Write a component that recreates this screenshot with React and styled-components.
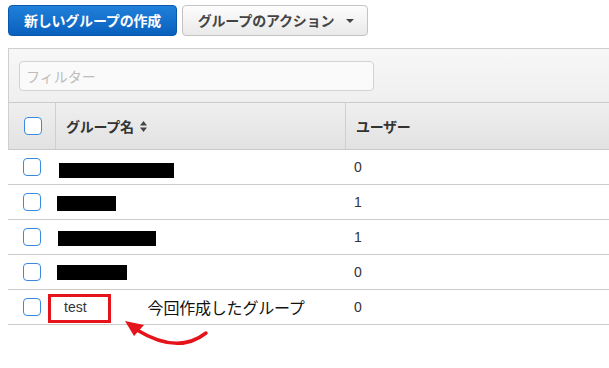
import React from "react";
import styled, { createGlobalStyle } from "styled-components";

const GlobalStyle = createGlobalStyle`
  body {
    margin: 0;
    background: #fff;
    font-family: "Liberation Sans", "Noto Sans CJK JP", sans-serif;
    color: #333;
  }
`;

const rows = [
  { bar: 115, left: 4, users: 0, nudge: 3 },
  { bar: 59, left: 2, users: 1, nudge: 1 },
  { bar: 98, left: 3, users: 1, nudge: 1 },
  { bar: 70, left: 2, users: 0, nudge: 0 },
];

const App = () => {
  return (
    <>
      <GlobalStyle />
      <Page>
        <Toolbar>
          <PrimaryButton>新しいグループの作成</PrimaryButton>
          <SecondaryButton>
            グループのアクション
            <Caret />
          </SecondaryButton>
        </Toolbar>

        <Panel>
          <FilterBar>
            <FilterInput placeholder="フィルター" />
          </FilterBar>
          <HeaderRow>
            <CheckCell>
              <Checkbox />
            </CheckCell>
            <HeaderCell>
              グループ名
              <SortIcon width="7" height="11" viewBox="0 0 7 11">
                <polygon points="3.5,0 7,4.5 0,4.5" fill="#444" />
                <polygon points="0,6.5 7,6.5 3.5,11" fill="#444" />
              </SortIcon>
            </HeaderCell>
            <HeaderCell $divider>ユーザー</HeaderCell>
          </HeaderRow>
        </Panel>

        {rows.map((r, i) => (
          <Row key={i}>
            <CheckCell>
              <Checkbox />
            </CheckCell>
            <NameCell>
              <Redaction $w={r.bar} $left={r.left} $nudge={r.nudge} />
            </NameCell>
            <UsersCell>{r.users}</UsersCell>
          </Row>
        ))}

        <Row>
          <CheckCell>
            <Checkbox />
          </CheckCell>
          <NameCell $pad>
            <Highlight />
            <span>test</span>
            <Note>今回作成したグループ</Note>
            <Arrow width="92" height="30" viewBox="0 0 92 30">
              <path
                d="M86 15 Q58 37 17 12"
                fill="none"
                stroke="#e5141b"
                strokeWidth="3.5"
                strokeLinecap="round"
              />
              <polygon points="5,3 14,18 24,7" fill="#e5141b" />
            </Arrow>
          </NameCell>
          <UsersCell>0</UsersCell>
        </Row>
      </Page>
    </>
  );
};

export default App;

const Page = styled.div`
  width: 609px;
  height: 368px;
  overflow: hidden;
  box-sizing: border-box;
  padding: 5px 0 0 8px;
`;

const Toolbar = styled.div`
  display: flex;
  gap: 5px;
  height: 31px;
`;

const PrimaryButton = styled.button`
  box-sizing: border-box;
  width: 169px;
  height: 31px;
  padding: 0;
  border: 1px solid #0b58ae;
  border-radius: 4px;
  background: linear-gradient(#2080da, #0960bd);
  color: #fff;
  font-family: "Noto Sans CJK JP", sans-serif;
  font-weight: 700;
  font-size: 14px;
  line-height: 29px;
  letter-spacing: -0.2px;
`;

const SecondaryButton = styled.button`
  box-sizing: border-box;
  width: 186px;
  height: 31px;
  padding: 0 0 0 2px;
  border: 1px solid #c3c3c3;
  border-radius: 4px;
  background: linear-gradient(#fdfdfd, #e9e9e9);
  color: #444;
  font-family: "Noto Sans CJK JP", sans-serif;
  font-weight: 700;
  font-size: 14px;
  line-height: 29px;
  letter-spacing: -0.2px;
  display: flex;
  align-items: center;
  justify-content: center;
  gap: 8px;
`;

const Caret = styled.span`
  width: 0;
  height: 0;
  border-left: 4px solid transparent;
  border-right: 4px solid transparent;
  border-top: 4px solid #444;
  margin-left: 4px;
`;

const Panel = styled.div`
  margin-top: 12px;
  width: 700px;
  border-top: 1px solid #cfcfcf;
  border-left: 1px solid #cfcfcf;
`;

const FilterBar = styled.div`
  height: 54px;
  box-sizing: border-box;
  padding: 12px 10px;
  background: linear-gradient(#f7f7f7, #efefef);
  border-bottom: 1px solid #cbcbcb;
`;

const FilterInput = styled.input`
  box-sizing: border-box;
  width: 355px;
  height: 30px;
  border: 1px solid #d2d2d2;
  border-radius: 4px;
  background: #fafafa;
  padding: 0 6px;
  font-family: "Noto Sans CJK JP", sans-serif;
  font-size: 14px;
  outline: none;
  &::placeholder {
    color: #bdbdbd;
  }
`;

const HeaderRow = styled.div`
  display: grid;
  grid-template-columns: 46px 290px 1fr;
  height: 47px;
  box-sizing: border-box;
  background: linear-gradient(#efefef, #e2e2e2);
  border-bottom: 1px solid #c9c9c9;
`;

const CheckCell = styled.div`
  display: flex;
  align-items: center;
  justify-content: center;
  border-right: ${(p) => (p.$divider ? "1px solid #ccc" : "none")};
`;

const HeaderCell = styled.div`
  display: flex;
  align-items: center;
  padding-left: 10px;
  border-left: 1px solid #cfcfcf;
  font-family: "Noto Sans CJK JP", sans-serif;
  font-weight: 700;
  font-size: 14px;
  color: #333;
  letter-spacing: -0.3px;
`;

const SortIcon = styled.svg`
  margin-left: 6px;
  margin-top: 1px;
`;

const Checkbox = styled.span`
  box-sizing: border-box;
  width: 18px;
  height: 18px;
  border: 1px solid #3a8be0;
  border-radius: 4px;
  background: #fff;
  margin-left: 1px;
`;

const Row = styled.div`
  display: grid;
  grid-template-columns: 47px 290px 1fr;
  width: 700px;
  height: 35px;
  box-sizing: border-box;
  border-bottom: 1px solid #cbcbcb;
`;

const NameCell = styled.div`
  position: relative;
  display: flex;
  align-items: center;
  padding-left: ${(p) => (p.$pad ? "9px" : "0")};
  font-size: 14px;
  color: #333;
`;

const Redaction = styled.span`
  display: block;
  width: ${(p) => p.$w}px;
  height: 15px;
  background: #000;
  margin-left: ${(p) => p.$left}px;
  margin-top: ${(p) => p.$nudge * 2}px;
`;

const Highlight = styled.span`
  position: absolute;
  left: -7px;
  top: 4px;
  width: 63px;
  height: 29px;
  box-sizing: border-box;
  border: 3px solid #e5141b;
`;

const Note = styled.span`
  margin-left: 61px;
  font-family: "Noto Sans CJK JP", sans-serif;
  font-size: 16px;
  color: #111;
  line-height: 20px;
  letter-spacing: -0.2px;
`;

const Arrow = styled.svg`
  position: absolute;
  left: 65px;
  top: 28px;
  overflow: visible;
`;

const UsersCell = styled.div`
  display: flex;
  align-items: center;
  padding-left: 9px;
  font-size: 14px;
  color: #333;
`;
